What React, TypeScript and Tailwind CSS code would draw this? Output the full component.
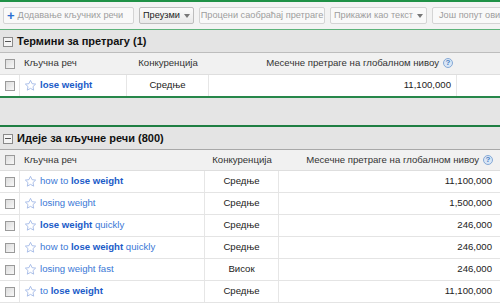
import React from 'react';

const font = { fontFamily: '"Liberation Sans", Arial, sans-serif' };

function Checkbox() {
  return (
    <span className="block w-[10px] h-[10px] border border-[#9a9a9a] bg-gradient-to-br from-[#dcdcdc] to-[#f8f8f8]" />
  );
}

function Star() {
  return (
    <svg width="13" height="13" viewBox="0 0 24 24" className="shrink-0">
      <path
        d="M12 2.5l2.9 6.1 6.6.8-4.9 4.6 1.3 6.6L12 17.3l-5.9 3.3 1.3-6.6-4.9-4.6 6.6-.8z"
        fill="#ffffff"
        stroke="#9fb6e6"
        strokeWidth="1.6"
        strokeLinejoin="round"
      />
    </svg>
  );
}

function Help() {
  return (
    <span className="inline-flex items-center justify-center w-[10px] h-[10px] rounded-full border border-[#86a9d6] bg-[#d9e6f6] text-[8px] leading-none font-bold text-[#4a7cc0] ml-[4px]">
      ?
    </span>
  );
}

function Collapse() {
  return (
    <span className="flex items-center justify-center w-[10px] h-[10px] border border-[#8a8a8a] bg-[#f4f4f4] mr-[4px]">
      <span className="block w-[6px] h-[1px] bg-[#555]" />
    </span>
  );
}

function Caret() {
  return <span className="inline-block ml-[4px] border-x-[3.5px] border-x-transparent border-t-[4px] border-t-[#777]" />;
}

type Part = { t: string; b?: boolean };

const ideas: { kw: Part[]; comp: string; vol: string }[] = [
  { kw: [{ t: 'how to ' }, { t: 'lose weight', b: true }], comp: 'Средње', vol: '11,100,000' },
  { kw: [{ t: 'losing weight' }], comp: 'Средње', vol: '1,500,000' },
  { kw: [{ t: 'lose weight', b: true }, { t: ' quickly' }], comp: 'Средње', vol: '246,000' },
  { kw: [{ t: 'how to ' }, { t: 'lose weight', b: true }, { t: ' quickly' }], comp: 'Средње', vol: '246,000' },
  { kw: [{ t: 'losing weight fast' }], comp: 'Висок', vol: '246,000' },
  { kw: [{ t: 'to ' }, { t: 'lose weight', b: true }], comp: 'Средње', vol: '11,100,000' },
];

function Keyword({ parts }: { parts: Part[] }) {
  return (
    <span className="whitespace-pre">
      {parts.map((p, i) =>
        p.b ? (
          <b key={i} className="text-[#1a5bc8] font-bold">{p.t}</b>
        ) : (
          <span key={i} className="text-[#3a78d6]">{p.t}</span>
        )
      )}
    </span>
  );
}

export default function App() {
  return (
    <div className="w-[500px] h-[306px] overflow-hidden bg-white text-[9.6px] text-[#222]" style={font}>
      {/* toolbar */}
      <div className="border-t-2 border-[#1f9146] border-b border-b-[#5db37a] h-[30px] bg-[#f3f3f3] flex items-start pt-[5px] pl-[3px] gap-[5px] whitespace-nowrap text-[9.2px] overflow-hidden">
        <div className="h-[17px] w-[131px] border border-[#d4d4d4] rounded-[2px] bg-[#f9f9f9] flex items-center pl-[3px] text-[#9d9d9d] shrink-0">
          <span className="text-[#2a6fd0] font-bold text-[13px] leading-none mr-[3px] -mt-[1px]">+</span>
          Додавање кључних речи
        </div>
        <div className="h-[17px] w-[55px] border border-[#bdbdbd] rounded-[2px] bg-gradient-to-b from-[#fbfbfb] to-[#e9e9e9] flex items-center justify-center text-[#222] shrink-0">
          Преузми
          <Caret />
        </div>
        <div className="h-[17px] w-[126px] border border-[#d4d4d4] rounded-[2px] bg-[#f9f9f9] flex items-center justify-center text-[#9d9d9d] shrink-0">
          Процени саобраћај претраге
        </div>
        <div className="h-[17px] w-[97px] border border-[#d4d4d4] rounded-[2px] bg-[#f9f9f9] flex items-center justify-center text-[#9d9d9d] shrink-0">
          Прикажи као текст
          <Caret />
        </div>
        <div className="h-[17px] w-[80px] border border-[#d4d4d4] rounded-[2px] bg-[#f9f9f9] flex items-center pl-[6px] text-[#9d9d9d] shrink-0">
          Још попут ових
        </div>
      </div>

      {/* section 1 */}
      <div className="h-[23px] bg-[#e4e4e4] border-b border-[#bdbdbd] flex items-center pl-[3px] pt-[1px] font-bold text-[11px] text-[#111]">
        <Collapse />
        Термини за претрагу (1)
      </div>
      <div className="flex h-[22px] bg-[#f1f1f1] border-b border-[#dedede] items-center">
        <div className="w-[20px] flex justify-center"><Checkbox /></div>
        <div className="w-[107px] pl-[4px] text-[#333]">Кључна реч</div>
        <div className="w-[82px] text-center text-[#333]">Конкуренција</div>
        <div className="w-[248px] flex items-center justify-end pr-[4px] text-[#333]">
          Месечне претраге на глобалном нивоу
          <Help />
        </div>
      </div>
      <div className="flex h-[23px] items-stretch border-b-2 border-[#27874a]">
        <div className="w-[20px] flex items-center justify-center border-r border-[#e6e6e6]"><Checkbox /></div>
        <div className="w-[107px] flex items-center pl-[4px] gap-[3px] border-r border-[#e6e6e6]">
          <Star />
          <Keyword parts={[{ t: 'lose weight', b: true }]} />
        </div>
        <div className="w-[82px] flex items-center justify-center border-r border-[#e6e6e6]">Средње</div>
        <div className="w-[248px] flex items-center justify-end pr-[5px] border-r border-[#e6e6e6]">11,100,000</div>
      </div>

      <div className="h-[29px] bg-[#e5e5e5] border-b-2 border-[#1f7f43]" />

      {/* section 2 */}
      <div className="h-[23px] bg-[#e4e4e4] border-b border-[#a8a8a8] flex items-center pl-[3px] pt-[1px] font-bold text-[11px] text-[#111]">
        <Collapse />
        Идеје за кључне речи (800)
      </div>
      <div className="flex h-[21px] bg-[#f1f1f1] border-b border-[#dedede] items-center">
        <div className="w-[20px] flex justify-center"><Checkbox /></div>
        <div className="w-[185px] pl-[4px] text-[#333]">Кључна реч</div>
        <div className="w-[74px] text-center text-[#333]">Конкуренција</div>
        <div className="flex-1 flex items-center justify-end pr-[7px] text-[#333]">
          Месечне претраге на глобалном нивоу
          <Help />
        </div>
      </div>
      {ideas.map((r, i) => (
        <div key={i} className="flex h-[22px] items-stretch border-b border-[#e4e4e4]">
          <div className="w-[20px] flex items-center justify-center border-r border-[#e6e6e6]"><Checkbox /></div>
          <div className="w-[185px] flex items-center pl-[4px] gap-[3px] border-r border-[#e6e6e6]">
            <Star />
            <Keyword parts={r.kw} />
          </div>
          <div className="w-[74px] flex items-center justify-center border-r border-[#e6e6e6]">{r.comp}</div>
          <div className="flex-1 flex items-center justify-end pr-[8px]">{r.vol}</div>
        </div>
      ))}
    </div>
  );
}
